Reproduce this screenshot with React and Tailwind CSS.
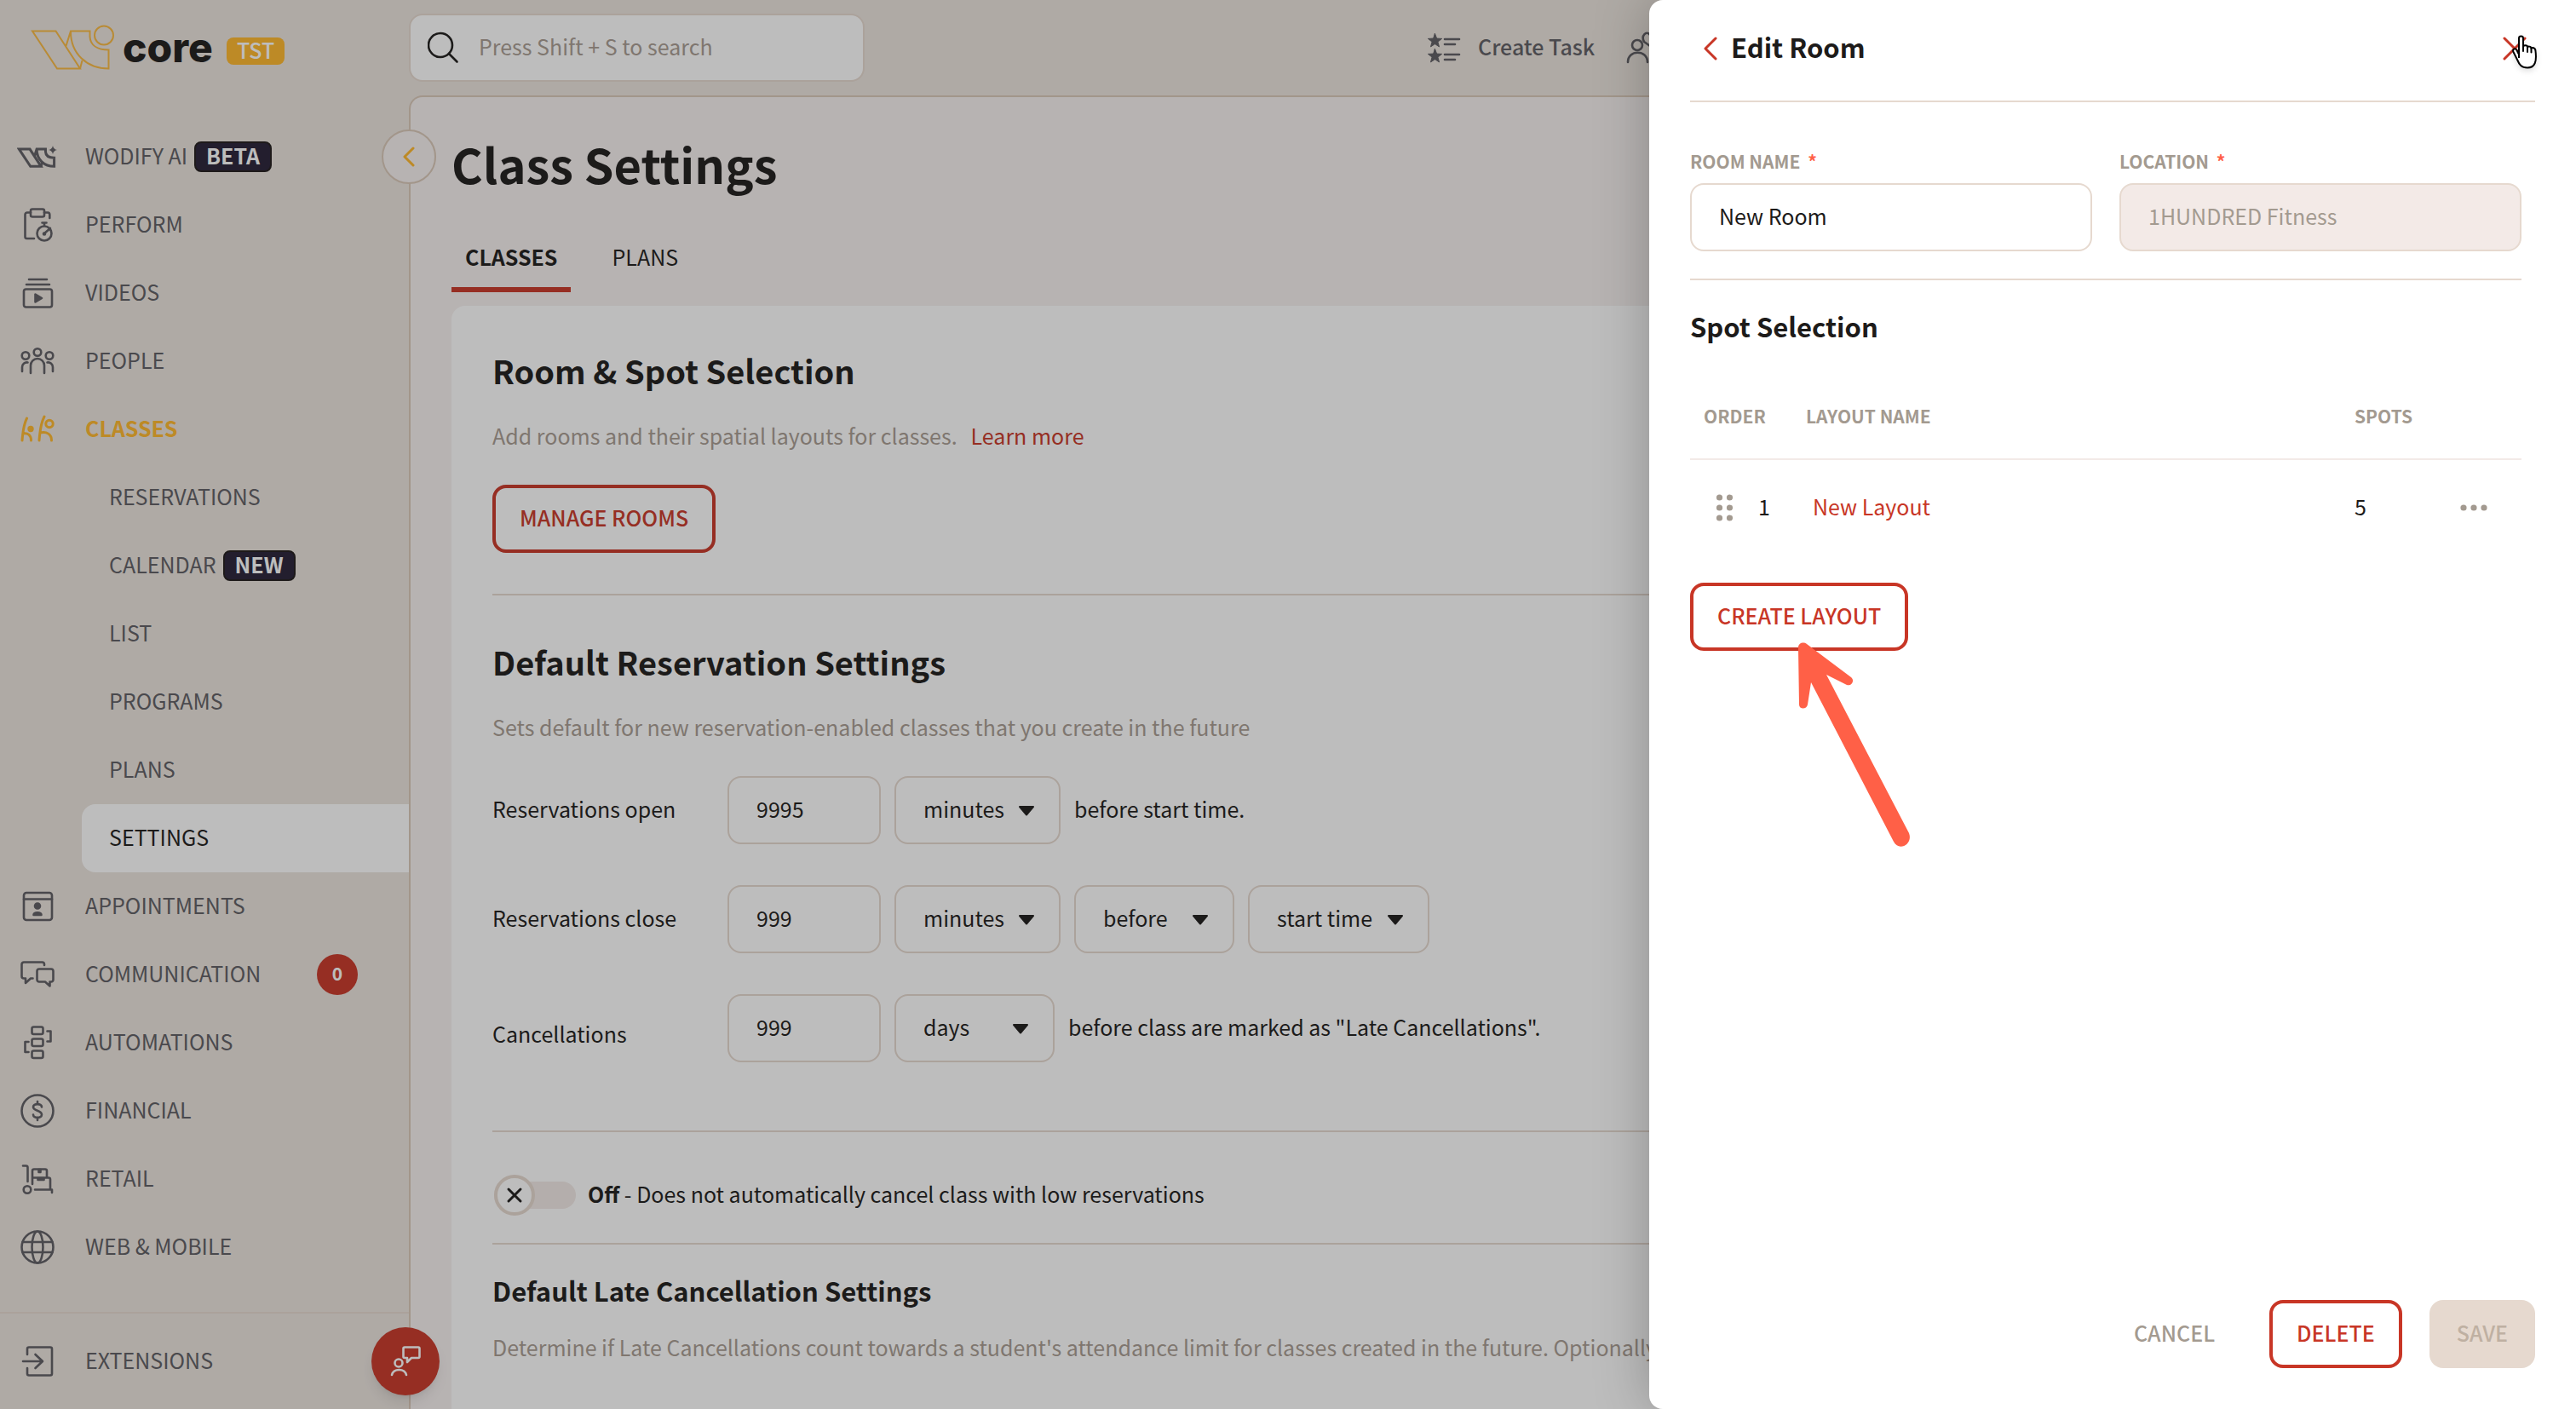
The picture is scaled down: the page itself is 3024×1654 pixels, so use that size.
import React, { useState } from "react";

const W_PATHS = [
  "M37 36.5 H64.5 L93 80.5 H66 Z",
  "M76.5 54 L82 36.5 H104.5 V43 C105 53 113 58.5 126.5 58.5 V80.5 C101 80.5 82 63 82 37",
  "M95.5 71 L93 80.5",
];

const STAR = "l2.1 5.6 l6 0.3 l-4.7 3.7 l1.6 5.8 l-5 -3.3 l-5 3.3 l1.6 -5.8 l-4.7 -3.7 l6 -0.3 Z";

const Stroke = ({ children, width = 2.6, className = "size-10" }) => (
  <svg
    viewBox="0 0 40 40"
    fill="none"
    stroke="currentColor"
    strokeWidth={width}
    strokeLinecap="round"
    strokeLinejoin="round"
    className={className}
    aria-hidden="true"
  >
    {children}
  </svg>
);

const AiIcon = () => (
  <svg viewBox="0 0 48 40" fill="none" stroke="currentColor" className="h-10 w-12" aria-hidden="true">
    <g transform="translate(-14.6 -5.7) scale(0.46)" strokeWidth="6.500" strokeLinejoin="miter">
      {W_PATHS.map((d) => (
        <path key={d} d={d} />
      ))}
    </g>
    <path
      d="M42 7 Q42.8 11.2 47 12 Q42.8 12.8 42 17 Q41.2 12.8 37 12 Q41.2 11.2 42 7Z"
      fill="currentColor"
      stroke="none"
    />
  </svg>
);

const PerformIcon = () => (
  <Stroke>
    <rect x="12" y="1.5" width="16" height="9" rx="2" />
    <path d="M12 5.500 H8 A2.500 2.500 0 0 0 5.500 8 V34 A2 2 0 0 0 7.500 36 H16 M28 5.500 H32 A2.500 2.500 0 0 1 34.300 8 V12" />
    <circle cx="28" cy="30" r="8.500" />
    <path d="M28 21 V17.500 M25.500 17.500 H30.500 M28 30 L35 24" />
    <circle cx="28" cy="30.500" r="1" fill="currentColor" />
  </Stroke>
);

const VideosIcon = () => (
  <Stroke>
    <path d="M10 4 H31 M7 10 H34" />
    <rect x="4" y="15.500" width="33" height="21" rx="2.500" />
    <path d="M17.500 21.500 V30.500 L25 26 Z" fill="currentColor" />
  </Stroke>
);

const PeopleIcon = () => (
  <Stroke>
    <circle cx="20" cy="9.500" r="4.300" />
    <circle cx="6" cy="13.500" r="4.300" />
    <circle cx="34" cy="13.500" r="4.300" />
    <path d="M12 34 V25 A8 8 0 0 1 28 25 V34 M2 32 V27 A5.500 5.500 0 0 1 8.500 21.500 M38 32 V27 A5.500 5.500 0 0 0 31.500 21.500" />
  </Stroke>
);

const ClassesIcon = () => (
  <Stroke width={3}>
    <path d="M7.500 7 C3 16 3 24 2 33 M3 25 C9 24 12.500 27 12.500 33" />
    <circle cx="12" cy="19.500" r="2.200" fill="currentColor" />
    <path d="M28 5 C23 15 23 23 22 33 M23 24 C31 22 36.500 26 36.500 33" />
    <circle cx="34" cy="13.500" r="4.200" />
  </Stroke>
);

const AppointmentsIcon = () => (
  <Stroke>
    <rect x="4" y="4" width="33" height="32" rx="3" />
    <path d="M4 11.500 H37" />
    <circle cx="20" cy="19.500" r="3" fill="currentColor" />
    <path d="M15.500 30 C16 26.500 24 26.500 24.500 30 Z" fill="currentColor" />
  </Stroke>
);

const CommunicationIcon = () => (
  <Stroke>
    <path d="M28 9 V8 A2.500 2.500 0 0 0 25.500 5.500 H4 A2.500 2.500 0 0 0 1.500 8 V22 A2.500 2.500 0 0 0 4 24.500 H6 V30 L12 24.500 H14.500" />
    <path d="M22 13.500 H36 A2.500 2.500 0 0 1 38.500 16 V26 A2.500 2.500 0 0 1 36 28.500 H34.500 V33.500 L29 28.500 H22 A2.500 2.500 0 0 1 19.500 26 V16 A2.500 2.500 0 0 1 22 13.500Z" />
  </Stroke>
);

const AutomationsIcon = () => (
  <Stroke>
    <rect x="13.500" y="1.500" width="13" height="8.500" rx="2" />
    <rect x="13.500" y="15.500" width="13" height="8.500" rx="2" />
    <rect x="13.500" y="29.500" width="13" height="8.500" rx="2" />
    <path d="M31.500 6.500 H35.500 V18.500 H31.500 M9.500 19 H5.500 V31 H9.500" />
  </Stroke>
);

const FinancialIcon = () => (
  <Stroke>
    <circle cx="20" cy="20" r="18.500" />
    <path d="M25 15.500 C25 11 15 11 15 15.500 C15 20.500 25 19 25 24.500 C25 29 15 29 15 24.500 M20 9 V12 M20 28 V31" />
  </Stroke>
);

const RetailIcon = () => (
  <Stroke>
    <path d="M3 4.500 H6.500 A2 2 0 0 1 8.500 6.500 V23" />
    <circle cx="8" cy="32.500" r="4.300" />
    <path d="M14 26 V10.500 A2 2 0 0 1 16 8.500 H29 A2 2 0 0 1 31 10.500 V18.500 M14 18.500 H33 A2 2 0 0 1 35 20.500 V32 M17 32.500 H37 V36" />
    <path d="M21.500 9 H23.500 V12 H21.500Z M20.500 19 H27.500 V21 H20.500Z" fill="currentColor" />
  </Stroke>
);

const WebIcon = () => (
  <Stroke>
    <circle cx="20" cy="20" r="18.500" />
    <ellipse cx="20" cy="20" rx="6.500" ry="18.500" />
    <path d="M2.500 14 H37.500 M2.500 26 H37.500" />
  </Stroke>
);

const ExtensionsIcon = () => (
  <Stroke>
    <path d="M8 12 V5.500 A2 2 0 0 1 10 3.500 H35 A2 2 0 0 1 37 5.500 V34.500 A2 2 0 0 1 35 36.500 H10 A2 2 0 0 1 8 34.500 V28" />
    <path d="M3 20 H25.500 M17.500 12 L26 20 L17.500 28" />
  </Stroke>
);

const NAV_ITEMS = [
  { label: "WODIFY AI", icon: AiIcon, badge: "BETA" },
  { label: "PERFORM", icon: PerformIcon },
  { label: "VIDEOS", icon: VideosIcon },
  { label: "PEOPLE", icon: PeopleIcon },
  {
    label: "CLASSES",
    icon: ClassesIcon,
    active: true,
    children: [
      { label: "RESERVATIONS" },
      { label: "CALENDAR", badge: "NEW" },
      { label: "LIST" },
      { label: "PROGRAMS" },
      { label: "PLANS" },
      { label: "SETTINGS", active: true },
    ],
  },
  { label: "APPOINTMENTS", icon: AppointmentsIcon },
  { label: "COMMUNICATION", icon: CommunicationIcon, count: 0 },
  { label: "AUTOMATIONS", icon: AutomationsIcon },
  { label: "FINANCIAL", icon: FinancialIcon },
  { label: "RETAIL", icon: RetailIcon },
  { label: "WEB & MOBILE", icon: WebIcon },
];

const Badge = ({ children }) => (
  <span className="ml-2 flex h-9 items-center rounded-lg border-2 border-[#1f1a1a] bg-[#261f36] px-3 pb-1 font-bold text-white">
    {children}
  </span>
);

const NavItem = ({ item }) => {
  const Icon = item.icon;
  return (
    <li>
      <a
        href="#"
        className={
          item.active
            ? "flex h-20 items-center font-bold text-[#ffb72b]"
            : "flex h-20 items-center text-[#5d5c62]"
        }
      >
        <span className="flex w-[100px] justify-center pr-3">
          <Icon />
        </span>
        <span className="pb-1">{item.label}</span>
        {item.badge && <Badge>{item.badge}</Badge>}
        {item.count !== undefined && (
          <span className="mr-[60px] ml-auto flex size-12 items-center justify-center rounded-full bg-[#c83626] pb-1 text-[21px] font-bold text-white">
            {item.count}
          </span>
        )}
      </a>
      {item.children && (
        <ul className="pl-24">
          {item.children.map((child) => (
            <li key={child.label}>
              <a
                href="#"
                className={
                  child.active
                    ? "flex h-20 items-center rounded-l-2xl bg-white pl-8 text-[#1d1b1a]"
                    : "flex h-20 items-center pl-8 text-[#5d5c62]"
                }
              >
                <span className="pb-1">{child.label}</span>
                {child.badge && <Badge>{child.badge}</Badge>}
              </a>
            </li>
          ))}
        </ul>
      )}
    </li>
  );
};

const Sidebar = () => (
  <aside className="flex w-[480px] shrink-0 flex-col">
    <div className="flex h-36 items-start pt-6 pl-9">
      <svg viewBox="35 28 100 56" fill="none" stroke="#f9b940" strokeWidth="2" className="mt-1 h-14 w-[100px]" aria-hidden="true">
        {W_PATHS.map((d) => (
          <path key={d} d={d} />
        ))}
        <circle cx="121" cy="41.500" r="11" />
      </svg>
      <span className="ml-2 font-['Inter',sans-serif] text-[48px] leading-[64px] font-extrabold text-[#1d1b1a]">core</span>
      <span className="mt-5 ml-4 flex h-8 items-center rounded-lg bg-[#ffb72b] px-3 pb-1 font-medium text-white">TST</span>
    </div>
    <nav className="flex flex-1 flex-col">
      <ul>
        {NAV_ITEMS.map((item) => (
          <NavItem key={item.label} item={item} />
        ))}
      </ul>
      <ul className="mt-auto border-t-2 border-[#e6d9cf] py-4">
        <NavItem item={{ label: "EXTENSIONS", icon: ExtensionsIcon }} />
      </ul>
    </nav>
  </aside>
);

const TopBar = () => (
  <header className="flex h-28 shrink-0 items-center">
    <label className="flex h-20 w-[535px] items-center rounded-2xl border-2 border-[#e6d9cf] bg-white pl-5">
      <Stroke className="size-10 shrink-0 text-[#1d1b1a]">
        <circle cx="15" cy="17" r="14" />
        <path d="M25 27 L34.500 36.500" />
      </Stroke>
      <input
        type="text"
        aria-label="Search"
        placeholder="Press Shift + S to search"
        className="ml-5 w-full bg-transparent pb-1 placeholder-[#a89c92] outline-none"
      />
    </label>
    <div className="ml-[660px] flex shrink-0 items-center gap-9 font-medium text-[#5d5c62]">
      <button type="button" className="flex items-center gap-5">
        <Stroke>
          <path d={`M9.5 3.5 ${STAR} M9.5 21.5 ${STAR}`} fill="currentColor" strokeWidth="1" />
          <path d="M21 10 H38 M21 16 H33 M21 28 H38 M21 34 H33" />
        </Stroke>
        <span className="pb-1">Create Task</span>
      </button>
      <button type="button" aria-label="Add person">
        <Stroke>
          <circle cx="14" cy="17" r="6" />
          <path d="M3 37 C3 22 26 22 26 37 M22 13 C18 6 25 -1 29 5 C33 -1 40 6 36 12 L29 18 Z" />
        </Stroke>
      </button>
    </div>
  </header>
);

const fieldClass =
  "h-20 rounded-2xl border-2 border-[#e6d9cf] bg-white px-8 pb-1 text-[#1d1b1a] outline-none";

const Select = ({ label, value, width, options }) => (
  <span className="relative">
    <select aria-label={label} defaultValue={value} className={`${fieldClass} ${width} appearance-none`}>
      {options.map((option) => (
        <option key={option}>{option}</option>
      ))}
    </select>
    <svg viewBox="0 0 20 13" className="pointer-events-none absolute top-[34px] right-[30px] h-[13px] w-5 text-[#1d1b1a]" aria-hidden="true">
      <path d="M2 2 H18 L10 11.500 Z" fill="currentColor" stroke="currentColor" strokeWidth="2" strokeLinejoin="round" />
    </svg>
  </span>
);

const UNITS = ["minutes", "hours", "days"];

const SettingRow = ({ id, label, value, labelClass = "w-[276px] pb-1", children }) => (
  <div className="flex items-center">
    <label htmlFor={id} className={labelClass}>
      {label}
    </label>
    <div className="flex items-center gap-4">
      <input id={id} type="text" defaultValue={value} className={`${fieldClass} w-[180px]`} />
      {children}
    </div>
  </div>
);

const OutlineButton = ({ children }) => (
  <button
    type="button"
    className="h-20 rounded-2xl border-4 border-[#c83626] px-7 pb-1 font-medium text-[#c83626]"
  >
    {children}
  </button>
);

const ClassSettings = () => {
  const [autoCancel, setAutoCancel] = useState(false);

  return (
    <main className="flex-1 overflow-hidden rounded-tl-2xl border-t-2 border-l-2 border-[#dac8b8] bg-[#f7f1f0] px-12 pt-[42px] text-[#1d1b1a]">
      <h1 className="text-[56px] leading-[72px] font-bold">Class Settings</h1>

      <div role="tablist" className="mt-[53px] flex gap-8">
        <button type="button" role="tab" aria-selected="true" className="border-b-6 border-[#c83626] px-4 pb-4 font-bold">
          CLASSES
        </button>
        <button type="button" role="tab" aria-selected="false" className="border-b-6 border-transparent px-4 pb-4">
          PLANS
        </button>
      </div>

      <div className="mt-4 rounded-t-2xl bg-white px-12 pt-12 pb-24">
        <section>
          <h2 className="text-[38px] leading-[56px] font-bold">Room &amp; Spot Selection</h2>
          <p className="mt-7 mb-[38px] text-[#a89c92]">
            Add rooms and their spatial layouts for classes.
            <a href="#" className="ml-4 text-[#c83626]">
              Learn more
            </a>
          </p>
          <OutlineButton>MANAGE ROOMS</OutlineButton>
        </section>

        <section className="mt-12 border-t-2 border-[#e6d9cf] pt-[50px]">
          <h2 className="text-[38px] leading-[56px] font-bold">Default Reservation Settings</h2>
          <p className="mt-7 mb-[38px] text-[#a89c92]">
            Sets default for new reservation-enabled classes that you create in the future
          </p>
          <div className="flex flex-col gap-12">
            <SettingRow id="open" label="Reservations open" value="9995">
              <Select label="Open unit" value="minutes" width="w-[195px]" options={UNITS} />
              <span className="pb-1">before start time.</span>
            </SettingRow>
            <SettingRow id="close" label="Reservations close" value="999">
              <Select label="Close unit" value="minutes" width="w-[195px]" options={UNITS} />
              <Select label="Close relation" value="before" width="w-[188px]" options={["before", "after"]} />
              <Select label="Close reference" value="start time" width="w-[213px]" options={["start time", "end time"]} />
            </SettingRow>
            <SettingRow id="cancel" label="Cancellations" value="999" labelClass="w-[276px] pt-3">
              <Select label="Cancellation unit" value="days" width="w-[188px]" options={UNITS} />
              <span className="pb-1">before class are marked as "Late Cancellations".</span>
            </SettingRow>
          </div>
        </section>

        <section className="mt-20 border-t-2 border-[#e6d9cf] pt-[50px] pb-8">
          <label className="flex h-12 items-center">
            <input
              type="checkbox"
              role="switch"
              checked={autoCancel}
              onChange={(e) => setAutoCancel(e.target.checked)}
              className="sr-only"
            />
            <span className="ml-0.5 flex h-8 w-24 items-center rounded-full bg-[#f3eae7]">
              <span className="flex size-12 items-center justify-center rounded-full border-4 border-[#e6d9cf] bg-white">
                <svg viewBox="0 0 20 20" className="size-5" fill="none" stroke="currentColor" strokeWidth="3" strokeLinecap="round" aria-hidden="true">
                  <path d="M3 3 L17 17 M17 3 L3 17" />
                </svg>
              </span>
            </span>
            <span className="ml-3.5 pb-1">
              <b className="font-bold">Off</b> - Does not automatically cancel class with low reservations
            </span>
          </label>
        </section>

        <section className="border-t-2 border-[#e6d9cf] pt-[30px]">
          <h3 className="text-[31px] leading-[48px] font-bold">Default Late Cancellation Settings</h3>
          <p className="mt-[22px] whitespace-nowrap text-[#a89c92]">
            Determine if Late Cancellations count towards a student's attendance limit for classes created in the
            future. Optionally
          </p>
        </section>
      </div>
    </main>
  );
};

const RoomPanel = ({ layouts }) => (
  <div
    role="dialog"
    aria-label="Edit Room"
    className="absolute inset-y-0 right-0 flex w-[1088px] max-w-full flex-col rounded-l-2xl bg-white pl-12 text-[#1d1b1a] shadow-[0_0_64px_rgba(0,0,0,0.25)]"
  >
    <header className="mr-12 flex h-[120px] shrink-0 items-center border-b-2 border-[#e6d9cf] pb-1">
      <button type="button" aria-label="Back" className="flex w-12 justify-center text-[#c83626]">
        <svg viewBox="0 0 16 28" fill="none" stroke="currentColor" strokeWidth="3" strokeLinecap="round" strokeLinejoin="round" className="h-7 w-4">
          <path d="M14 2 L2 14 L14 26" />
        </svg>
      </button>
      <h2 className="pb-1 text-[31px] leading-[48px] font-bold">Edit Room</h2>
      <button type="button" aria-label="Close" className="relative mr-2.5 ml-auto text-[#c83626]">
        <svg viewBox="0 0 28 28" fill="none" stroke="currentColor" strokeWidth="3" strokeLinecap="round" className="size-7">
          <path d="M2 2 L26 26 M26 2 L2 26" />
        </svg>
        <svg viewBox="0 0 32 42" className="absolute -top-0.5 left-2.5 h-[42px] w-8 drop-shadow-md" aria-hidden="true">
          <path
            d="M9 27 L9 4 C9 0.800 14 0.800 14 4 V14 C14 11.500 19 11.500 19 14 V15 C19 13 23.500 13 23.500 16 C24 14.500 28.500 14.500 28.500 19 C30 31 28 38.500 19 38.500 C12 38.500 9.500 35 7 29 L2.500 20 C1 16.500 4.500 15 6.500 18 L9 23"
            fill="#fff"
            stroke="#000"
            strokeWidth="2"
            strokeLinejoin="round"
          />
          <path d="M14 13 V19 M19 14.500 V20 M23.500 16 V20.500" stroke="#000" strokeWidth="2" strokeLinecap="round" />
        </svg>
      </button>
    </header>

    <div className="mr-16 flex-1">
      <div className="grid grid-cols-2 gap-8 border-b-2 border-[#e6d9cf] pt-[52px] pb-8">
        <div className="flex flex-col">
          <label htmlFor="room-name" className="mb-[9px] text-[21px] leading-[34px] font-bold text-[#a39a90]">
            ROOM NAME <span className="ml-1 text-[#ff6047]">*</span>
          </label>
          <input id="room-name" type="text" defaultValue="New Room" className={fieldClass} />
        </div>
        <div className="flex flex-col">
          <label htmlFor="location" className="mb-[9px] text-[21px] leading-[34px] font-bold text-[#a39a90]">
            LOCATION <span className="ml-1 text-[#ff6047]">*</span>
          </label>
          <input
            id="location"
            type="text"
            disabled
            defaultValue="1HUNDRED Fitness"
            className="h-20 rounded-2xl border-2 border-[#e6d9cf] bg-[#f3eae7] px-8 pb-1 text-[#a39a90]"
          />
        </div>
      </div>

      <h3 className="mt-[30px] text-[31px] leading-[48px] font-bold">Spot Selection</h3>
      <table className="mt-[30px] w-full text-left">
        <thead>
          <tr className="h-[102px] border-b-2 border-[#f3eae7] text-[21px] text-[#a39a90]">
            <th className="w-[120px] pl-4 font-bold">ORDER</th>
            <th className="pl-4 font-bold">LAYOUT NAME</th>
            <th className="w-[108px] font-bold">SPOTS</th>
            <th className="w-[88px]" aria-label="Actions" />
          </tr>
        </thead>
        <tbody>
          {layouts.map((layout, index) => (
            <tr key={layout.name} className="h-[112px]">
              <td className="pl-7">
                <span className="flex items-center gap-7">
                  <svg viewBox="0 0 24 36" className="h-9 w-6" fill="#a39a90" aria-hidden="true">
                    {[6, 18, 30].map((cy) => (
                      <g key={cy}>
                        <circle cx="6.500" cy={cy} r="3.600" />
                        <circle cx="18.500" cy={cy} r="3.600" />
                      </g>
                    ))}
                  </svg>
                  <span className="pb-1">{index + 1}</span>
                </span>
              </td>
              <td className="pb-1 pl-6">
                <a href="#" className="text-[#c83626]">
                  {layout.name}
                </a>
              </td>
              <td className="pb-1">{layout.spots}</td>
              <td className="pl-4">
                <button type="button" aria-label="More actions" className="block">
                  <svg viewBox="0 0 32 8" className="h-2 w-8" fill="#a39a90">
                    <circle cx="4" cy="4" r="3.600" />
                    <circle cx="16" cy="4" r="3.600" />
                    <circle cx="28" cy="4" r="3.600" />
                  </svg>
                </button>
              </td>
            </tr>
          ))}
        </tbody>
      </table>
      <div className="relative mt-[33px] inline-block">
        <OutlineButton>CREATE LAYOUT</OutlineButton>
        <svg
          viewBox="2108 750 140 250"
          fill="#ff6047"
          className="pointer-events-none absolute top-[66px] left-[124px] h-[250px] w-[140px]"
          aria-hidden="true"
        >
          <path d="M2111 760 C2111 755 2117 753 2121 756 L2173 795 C2178 799 2173 806 2168 804 L2144 792 L2241 978 C2246 991 2229 1000 2223 988 L2126 801 L2122 827 C2121 833 2112 833 2112 827 Z" />
        </svg>
      </div>
    </div>

    <footer className="mr-12 flex justify-end gap-8 pb-12">
      <button type="button" className="h-20 px-8 pb-1 font-medium text-[#a39a90]">
        CANCEL
      </button>
      <OutlineButton>DELETE</OutlineButton>
      <button type="button" disabled className="h-20 rounded-2xl bg-[#e6d9cf] px-8 pb-1 font-medium text-[#bfb0a2]">
        SAVE
      </button>
    </footer>
  </div>
);

const App = () => {
  const layouts = [{ name: "New Layout", spots: 5 }];

  return (
    <div className="relative flex h-screen overflow-hidden bg-[#ebe4de] font-['Noto_Sans_CJK_SC',sans-serif] text-[25px] leading-[40px]">
      <Sidebar />
      <div className="flex min-w-0 flex-1 flex-col">
        <TopBar />
        <ClassSettings />
      </div>

      <button
        type="button"
        aria-label="Collapse menu"
        className="absolute top-[152px] left-[448px] flex size-16 items-center justify-center rounded-full border-2 border-[#dac8b8] bg-[#f7f1f0] text-[#ffb72b]"
      >
        <svg viewBox="0 0 14 24" fill="none" stroke="currentColor" strokeWidth="3" strokeLinecap="round" strokeLinejoin="round" className="h-6 w-3.5">
          <path d="M12 2 L2 12 L12 22" />
        </svg>
      </button>
      <button
        type="button"
        aria-label="Help"
        className="absolute bottom-4 left-[436px] flex size-20 items-center justify-center rounded-full bg-[#c83626] text-white shadow-lg"
      >
        <Stroke>
          <circle cx="12" cy="22" r="4.500" />
          <path d="M4 36 C6 28 19 28 21 36 M19 3.500 H35 A1.500 1.500 0 0 1 36.500 5 V14.500 A1.500 1.500 0 0 1 35 16 H27 L22 21 V16 H19 A1.500 1.500 0 0 1 17.500 14.500 V5 A1.500 1.500 0 0 1 19 3.500Z" />
        </Stroke>
      </button>

      <div className="absolute inset-0 bg-[#1d1b1a]/29" />
      <RoomPanel layouts={layouts} />
    </div>
  );
};

export default App;
